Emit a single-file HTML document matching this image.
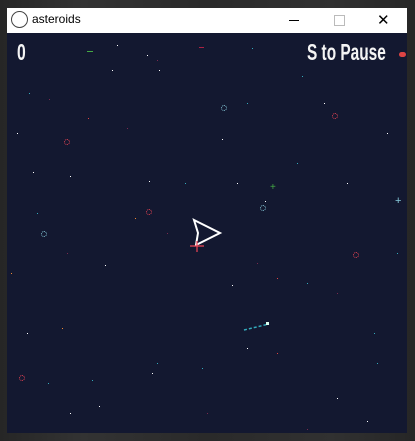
<!DOCTYPE html>
<html><head><style>
html,body{margin:0;padding:0;width:415px;height:441px;overflow:hidden;background:#2b2b2b;}
body{position:relative;font-family:"Liberation Sans",sans-serif;background:linear-gradient(90deg,#262626,#333 20%,#2a2a2a 50%,#313131 80%,#262626);}
#tb{position:absolute;left:7px;top:8px;width:400px;height:25px;background:#fff;}
#tb .c{position:absolute;left:4px;top:3px;width:15px;height:15px;border:1px solid #444;border-radius:50%;}
#tb .t{position:absolute;left:25px;top:4px;font-size:12px;color:#000;}
#game{position:absolute;left:7px;top:33px;width:400px;height:400px;background:#131830;overflow:hidden;}
#score{position:absolute;left:10px;top:6px;color:#f4f4f4;font-size:23px;font-weight:bold;transform:scaleX(0.68);transform-origin:0 0;}
#pause{position:absolute;left:300px;top:6px;color:#f4f4f4;font-size:23px;font-weight:bold;white-space:nowrap;transform:scaleX(0.67);transform-origin:0 0;}
#stars{position:absolute;left:0;top:0;width:1px;height:1px;background:transparent;
box-shadow:
105px 37px #fff,150px 27px #7a2a50,81px 85px #d44,142px 148px #fff,240px 70px #3ab,317px 70px #fff,258px 168px #fff,26px 139px #fff,215px 106px #fff,63px 143px #fff,
30px 180px #3ab,98px 232px #fff,225px 252px #fff,20px 300px #fff,85px 347px #3ab,240px 315px #fff,367px 300px #3ab,390px 220px #3ab,330px 365px #fff,
63px 380px #fff,92px 373px #fff,360px 388px #fff,270px 245px #d44,300px 250px #3ab,150px 330px #3ab,195px 335px #3ab,178px 150px #3ab,22px 60px #3ab,
4px 240px #e83,55px 295px #e83,128px 185px #e83,230px 150px #fff,290px 130px #3ab,340px 150px #fff,380px 100px #fff,370px 330px #3ab,10px 100px #fff,
42px 66px #7a2a50,120px 95px #7a2a50,160px 200px #7a2a50,250px 230px #7a2a50,330px 260px #7a2a50,60px 220px #7a2a50,200px 380px #7a2a50,300px 396px #7a2a50,
41px 350px #3ab,145px 340px #fff,270px 320px #d44,245px 15px #3ab,110px 12px #fff,140px 22px #fff,295px 43px #3ab,360px 20px #3ab,152px 37px #fff;}
.ring{position:absolute;width:4px;height:4px;border:1px dotted;border-radius:50%;}
</style></head><body>
<div id="tb"><div class="c"></div><div class="t">asteroids</div>
<div style="position:absolute;left:282px;top:12px;width:10px;height:1px;background:#000"></div>
<div style="position:absolute;left:327px;top:7px;width:9px;height:9px;border:1px solid #bbb"></div>
<div style="position:absolute;left:370px;top:3px;font-size:15px;color:#000">✕</div>
</div>
<div id="game">
<div id="stars"></div>
<div id="score">0</div>
<div id="pause">S to Pause</div>
<div style="position:absolute;left:392px;top:19px;width:7px;height:5px;background:#d44;border-radius:3px;"></div>
<div style="position:absolute;left:80px;top:18px;width:6px;height:1px;background:#4a4"></div>
<div style="position:absolute;left:192px;top:14px;width:5px;height:1px;background:#a24"></div>
<div class="ring" style="left:57px;top:106px;border-color:#e45"></div>
<div class="ring" style="left:214px;top:72px;border-color:#8cd"></div>
<div class="ring" style="left:139px;top:176px;border-color:#e45"></div>
<div class="ring" style="left:253px;top:172px;border-color:#8cd"></div>
<div class="ring" style="left:34px;top:198px;border-color:#8cd"></div>
<div class="ring" style="left:346px;top:219px;border-color:#e45"></div>
<div class="ring" style="left:12px;top:342px;border-color:#e45"></div>
<div class="ring" style="left:325px;top:80px;border-color:#e45"></div>
<div style="position:absolute;left:388px;top:162px;color:#8cd;font-size:11px">+</div>
<div style="position:absolute;left:263px;top:149px;color:#4a4;font-size:10px">+</div>
<svg style="position:absolute;left:0;top:0" width="400" height="400">
<path d="M187 187 L213 200 L189 212 L191 200 Z" fill="none" stroke="#fff" stroke-width="2"/>
<path d="M183 213 H197 M190 208 V219" stroke="#e45" stroke-width="1.2"/>
<path d="M237 297 L262 291" stroke="#3ab" stroke-width="1.5" stroke-dasharray="3 2"/>
<rect x="259" y="289" width="3" height="3" fill="#dfe"/>
</svg>
</div>
</body></html>
